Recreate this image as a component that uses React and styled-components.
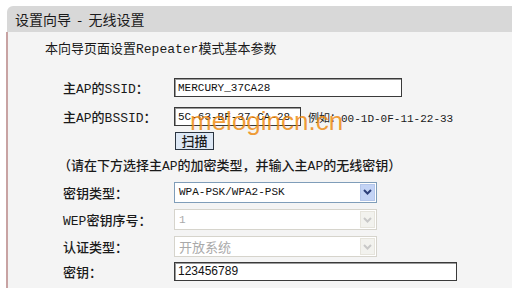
import React from "react";
import styled, { createGlobalStyle } from "styled-components";

const Global = createGlobalStyle`
  html, body { margin: 0; padding: 0; background: #ffffff; }
  body { width: 512px; height: 288px; overflow: hidden; }
`;

const Page = styled.div`
  position: relative;
  padding: 6px 0 0 6px;
  height: 282px;
  overflow: hidden;
`;

const TitleBar = styled.div`
  height: 26px;
  margin-left: 1px;
  background: #d8d8d8;
  border-top-left-radius: 6px;
  display: flex;
  align-items: center;
  padding-left: 8px;
  font-family: "Noto Sans CJK SC", "Noto Sans", sans-serif;
  font-size: 14px;
  color: #1a1a1a;
  white-space: pre;
`;

const Panel = styled.div`
  border-left: 2px solid #c8a3a3;
  background: #f4f4f4;
  height: 260px;
  padding: 8px 0 0 0;
  font-family: "Liberation Mono", "Noto Sans CJK SC", monospace;
  font-size: 13px;
  color: #1a1a1a;
`;

const Intro = styled.div`
  height: 20px;
  line-height: 20px;
  margin-left: 37px;
`;

const Form = styled.div`
  margin-top: 13px;
  margin-left: 55px;
  display: flex;
  flex-direction: column;
`;

const Row = styled.div`
  height: ${(p) => p.$h}px;
  display: grid;
  grid-template-columns: 111px auto;
  align-items: center;
`;

const Label = styled.div`
  font-weight: 500;
  white-space: nowrap;
`;

const Field = styled.div`
  display: flex;
  align-items: center;
  gap: 7px;
`;

const TextInput = styled.div`
  box-sizing: border-box;
  width: ${(p) => p.$w}px;
  height: 19px;
  background: #ffffff;
  border: 1px solid #3a3a3a;
  box-shadow: inset 1px 1px 0 #9a9a9a;
  padding-left: 3px;
  display: flex;
  align-items: center;
  font-family: ${(p) =>
    p.$sans ? '"Liberation Sans", "DejaVu Sans", sans-serif' : '"Liberation Mono", monospace'};
  font-size: ${(p) => (p.$sans ? 12 : 11)}px;
  color: #111;
  white-space: nowrap;
  overflow: hidden;
`;

const Hint = styled.span`
  font-family: "Liberation Mono", "Noto Sans CJK SC", monospace;
  font-size: 11px;
  color: #1a1a1a;
  white-space: nowrap;
`;

const ScanButton = styled.button`
  box-sizing: border-box;
  width: 39px;
  height: 18px;
  margin-left: 1px;
  padding: 0;
  background: #dde8f5;
  border: 1px solid #2a3440;
  font-family: "Noto Sans CJK SC", sans-serif;
  font-size: 13px;
  font-weight: 500;
  line-height: 16px;
  color: #1a1a1a;
`;

const Note = styled.div`
  height: ${(p) => p.$h}px;
  margin-left: -5px;
  display: flex;
  align-items: center;
  font-weight: 500;
  white-space: nowrap;
`;

const Select = styled.div`
  box-sizing: border-box;
  width: 203px;
  height: 21px;
  display: flex;
  align-items: center;
  background: #ffffff;
  border: 1px solid ${(p) => (p.$disabled ? "#d6d4cc" : "#7f9db9")};
  padding: 1px;
`;

const SelectText = styled.div`
  flex: 1;
  padding-left: 3px;
  font-family: ${(p) =>
    p.$cjk ? '"Noto Sans CJK SC", sans-serif' : '"Liberation Mono", "Noto Sans CJK SC", monospace'};
  font-size: ${(p) => (p.$cjk ? 13 : 11)}px;
  color: ${(p) => (p.$disabled ? "#a9a9a9" : "#111")};
  white-space: nowrap;
`;

const Arrow = styled.div`
  width: 15px;
  height: 17px;
  box-sizing: border-box;
  display: flex;
  align-items: center;
  justify-content: center;
  background: ${(p) => (p.$disabled ? "#f2f2ee" : "#c3d3f5")};
  border: 1px solid ${(p) => (p.$disabled ? "#e6e4dc" : "#b4c6ea")};
`;

const Watermark = styled.div`
  position: absolute;
  left: 190px;
  top: 106px;
  font-family: "Liberation Sans", sans-serif;
  font-size: 26px;
  color: rgba(238, 140, 20, 0.85);
  pointer-events: none;
  white-space: nowrap;
`;

function Chevron({ disabled }) {
  return (
    <svg width="9" height="6" viewBox="0 0 9 6">
      <path
        d="M1 1 L4.5 4.5 L8 1"
        fill="none"
        stroke={disabled ? "#c8c8c8" : "#2d3f7a"}
        strokeWidth="2"
      />
    </svg>
  );
}

function Dropdown({ value, disabled, cjk }) {
  return (
    <Select $disabled={disabled}>
      <SelectText $disabled={disabled} $cjk={cjk}>{value}</SelectText>
      <Arrow $disabled={disabled}>
        <Chevron disabled={disabled} />
      </Arrow>
    </Select>
  );
}

export default function App() {
  return (
    <>
      <Global />
      <Page>
        <TitleBar>设置向导  -  无线设置</TitleBar>
        <Panel>
          <Intro>本向导页面设置Repeater模式基本参数</Intro>
          <Form>
            <Row $h={29}>
              <Label>主AP的SSID：</Label>
              <Field>
                <TextInput $w={228}>MERCURY_37CA28</TextInput>
              </Field>
            </Row>
            <Row $h={29}>
              <Label>主AP的BSSID：</Label>
              <Field>
                <TextInput $w={127}>5C-63-BF-37-CA-28</TextInput>
                <Hint>例如：00-1D-0F-11-22-33</Hint>
              </Field>
            </Row>
            <Row $h={19}>
              <span />
              <Field>
                <ScanButton>扫描</ScanButton>
              </Field>
            </Row>
            <Note $h={28}>（请在下方选择主AP的加密类型，并输入主AP的无线密钥）</Note>
            <Row $h={28}>
              <Label>密钥类型：</Label>
              <Field>
                <Dropdown value="WPA-PSK/WPA2-PSK" />
              </Field>
            </Row>
            <Row $h={27}>
              <Label>WEP密钥序号：</Label>
              <Field>
                <Dropdown value="1" disabled />
              </Field>
            </Row>
            <Row $h={27}>
              <Label>认证类型：</Label>
              <Field>
                <Dropdown value="开放系统" disabled cjk />
              </Field>
            </Row>
            <Row $h={22}>
              <Label>密钥：</Label>
              <Field>
                <TextInput $w={283} $sans>123456789</TextInput>
              </Field>
            </Row>
          </Form>
        </Panel>
        <Watermark>melogincn.cn</Watermark>
      </Page>
    </>
  );
}
